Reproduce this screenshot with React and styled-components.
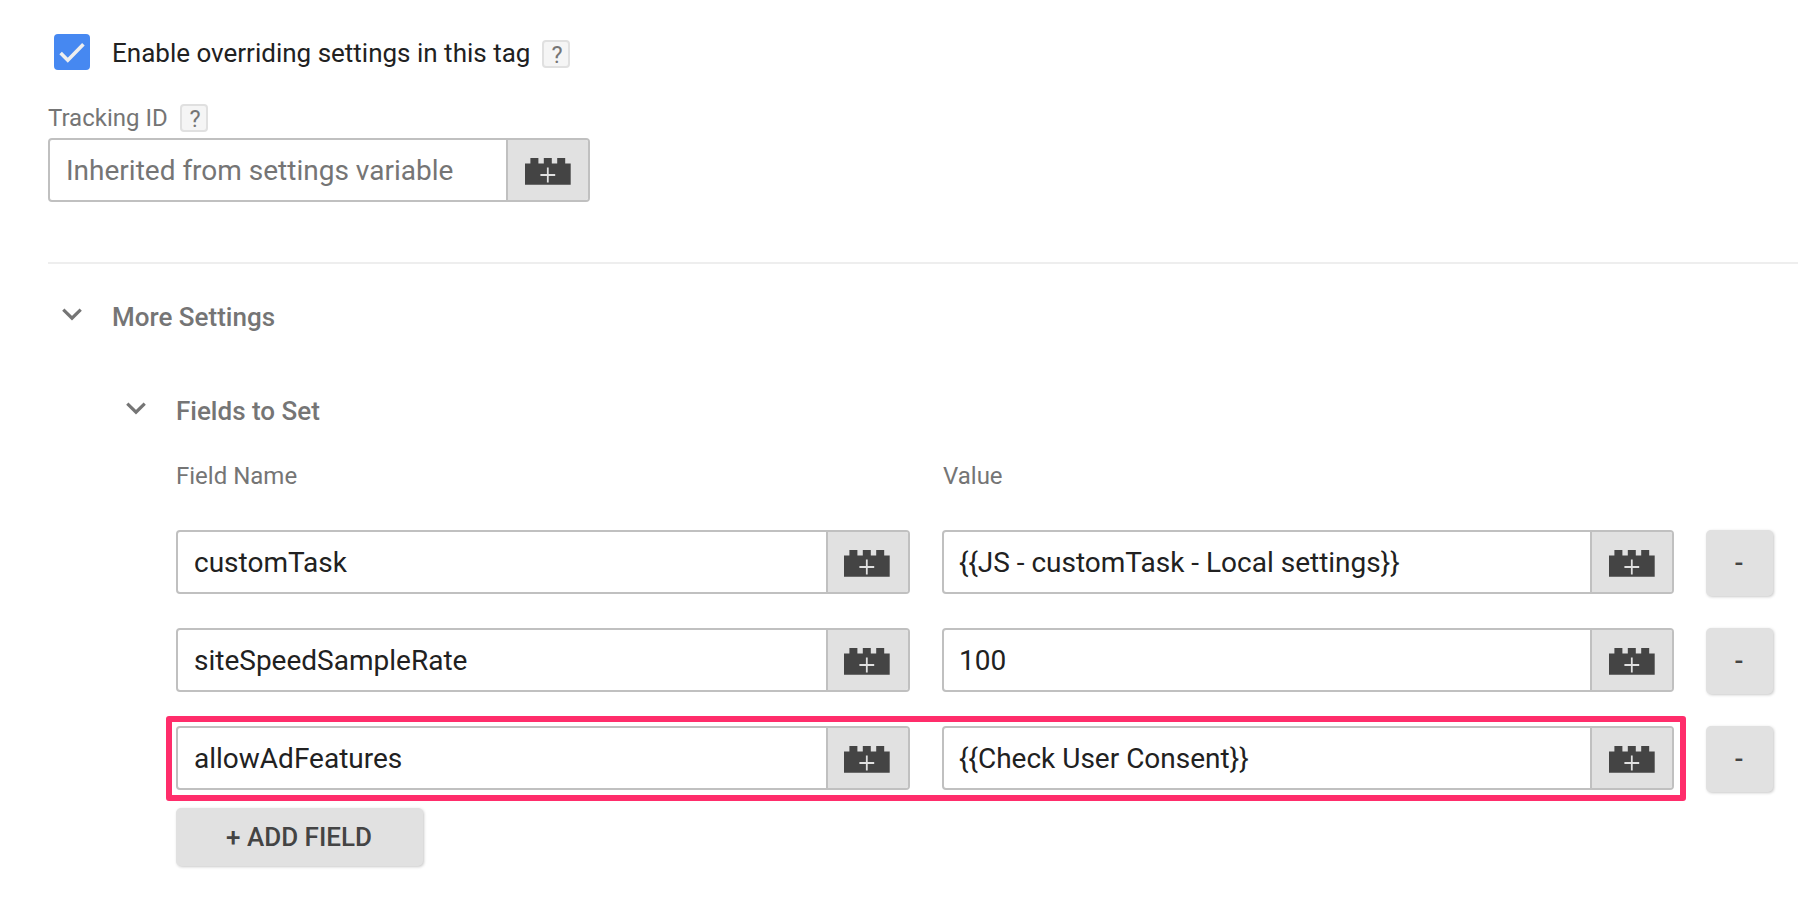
import React from 'react';
import styled, { createGlobalStyle } from 'styled-components';

const GlobalStyle = createGlobalStyle`
  *, *::before, *::after { box-sizing: border-box; }
  body {
    margin: 0;
    background: #fff;
    font-family: Roboto, "Liberation Sans", sans-serif;
    color: #212121;
    overflow: hidden;
  }
`;

const Page = styled.main`
  display: flex;
  flex-direction: column;
  width: 1798px;
  height: 900px;
  padding: 34px 0 0 48px;
`;

const CheckRow = styled.label`
  display: flex;
  align-items: flex-start;
  height: 36px;
  padding-left: 6px;
`;

const CheckBox = styled.span`
  display: flex;
  width: 36px;
  height: 36px;
  border-radius: 4px;
  background: #4688f1;
`;

const CheckText = styled.span`
  margin: 1px 12px 0 22px;
  font-size: 26px;
  line-height: 36px;
  width: 418px;
  white-space: nowrap;
`;

const Help = styled.span`
  display: flex;
  align-items: center;
  justify-content: center;
  width: 28px;
  height: 28px;
  margin-top: ${(p) => p.$top || 0}px;
  padding: 2px 0 0 2px;
  border: 2px solid #e0e0e0;
  border-radius: 4px;
  background: #f5f5f5;
  color: #757575;
  font-size: 23.5px;
  line-height: 24px;
`;

const LabelRow = styled.div`
  display: flex;
  align-items: center;
  height: 28px;
  margin: 34px 0 6px;
`;

const Label = styled.span`
  width: ${(p) => p.$width}px;
  padding-left: ${(p) => p.$inset || 0}px;
  color: #757575;
  font-size: 24px;
  line-height: 28px;
  white-space: nowrap;
`;

const Field = styled.div`
  display: flex;
  width: ${(p) => p.$width}px;
  height: 64px;
  border: 2px solid #c0c0c0;
  border-radius: 4px;
  background: #fff;
  overflow: hidden;
`;

const FieldText = styled.div`
  flex: 1;
  padding: 1px 0 0 ${(p) => p.$inset}px;
  color: ${(p) => (p.$placeholder ? '#757575' : '#212121')};
  font-size: 28px;
  line-height: 60px;
  height: 61px;
  white-space: nowrap;
`;

const VariableButton = styled.button`
  display: flex;
  align-items: flex-start;
  width: 82px;
  height: 60px;
  padding: 18px 0 0 ${(p) => p.$inset}px;
  border: 0;
  border-left: 2px solid #c0c0c0;
  background: #e1e1e1;
`;

const Divider = styled.hr`
  width: 100%;
  height: 2px;
  margin: 60px 0 0;
  border: 0;
  background: #eee;
`;

const SectionHeader = styled.div`
  display: flex;
  align-items: center;
  height: 36px;
  margin-top: ${(p) => p.$top}px;
  padding-left: ${(p) => p.$indent}px;
`;

const SectionTitle = styled.h2`
  margin: 0 0 0 30px;
  color: #757575;
  font-size: 26px;
  font-weight: 500;
  line-height: 36px;
`;

const ChevronSvg = styled.svg`
  display: block;
  margin-bottom: 5px;
`;

const Fields = styled.section`
  display: flex;
  flex-direction: column;
  padding-left: 128px;
`;

const ColumnHeaders = styled.div`
  display: flex;
  gap: 32px;
  margin: 33px 0 40px;
`;

const Rows = styled.div`
  display: flex;
  flex-direction: column;
  gap: 34px;
`;

const Row = styled.div`
  position: relative;
  display: flex;
  align-items: flex-start;
  gap: 32px;
  height: 64px;
`;

const Highlight = styled.span`
  position: absolute;
  top: -10px;
  left: -10px;
  width: 1520px;
  height: 85px;
  border: 6px solid #ff2d6b;
  border-radius: 3px;
  pointer-events: none;
`;

const Button = styled.button`
  flex: none;
  width: ${(p) => p.$width}px;
  height: ${(p) => p.$height}px;
  padding: 0 1px 0 0;
  border: 0;
  border-radius: 5px;
  background: #e1e1e1;
  box-shadow: 1px 1px 3px rgba(0, 0, 0, 0.22);
  color: #444;
  font-family: inherit;
  font-size: 26px;
  font-weight: 500;
  line-height: ${(p) => p.$height}px;
`;

const AddButton = styled(Button)`
  margin-top: 18px;
`;

function Brick() {
  return (
    <svg width="46" height="27" viewBox="0 0 46 27">
      <path
        fill="#444"
        d="M0 5.4H5.4V0H13.4V5.4H18.8V0H26.8V5.4H32.2V0H40.2V5.4H45.7V26.8H0Z"
      />
      <path stroke="#e1e1e1" strokeWidth="1.8" d="M15.4 17H30.2M22.8 9.6V24.4" />
    </svg>
  );
}

function Chevron() {
  return (
    <ChevronSvg width="20" height="13" viewBox="0 0 20 13">
      <path fill="none" stroke="#757575" strokeWidth="3.2" d="M1.3 1.6L10 10.2L18.7 1.6" />
    </ChevronSvg>
  );
}

function VariableField({ text, width, placeholder, textInset = 16, iconInset = 17 }) {
  return (
    <Field $width={width}>
      <FieldText $placeholder={placeholder} $inset={textInset}>{text}</FieldText>
      <VariableButton $inset={iconInset} aria-label="Insert variable">
        <Brick />
      </VariableButton>
    </Field>
  );
}

const rows = [
  { name: 'customTask', value: '{{JS - customTask - Local settings}}' },
  { name: 'siteSpeedSampleRate', value: '100' },
  { name: 'allowAdFeatures', value: '{{Check User Consent}}', highlighted: true },
];

export default function App() {
  return (
    <>
      <GlobalStyle />
      <Page>
        <CheckRow>
          <CheckBox>
            <svg width="36" height="36" viewBox="0 0 36 36">
              <path fill="none" stroke="#eee" strokeWidth="3.6" d="M6.6 19L13.8 26.3L29.4 10.3" />
            </svg>
          </CheckBox>
          <CheckText>Enable overriding settings in this tag</CheckText>
          <Help $top={6}>?</Help>
        </CheckRow>

        <LabelRow>
          <Label $width={132}>Tracking ID</Label>
          <Help>?</Help>
        </LabelRow>
        <VariableField text="Inherited from settings variable" width={542} placeholder />

        <Divider />

        <SectionHeader $top={35} $indent={14}>
          <Chevron />
          <SectionTitle>More Settings</SectionTitle>
        </SectionHeader>
        <SectionHeader $top={58} $indent={78}>
          <Chevron />
          <SectionTitle>Fields to Set</SectionTitle>
        </SectionHeader>

        <Fields>
          <ColumnHeaders>
            <Label $width={734}>Field Name</Label>
            <Label $width={732} $inset={1}>Value</Label>
          </ColumnHeaders>
          <Rows>
            {rows.map((row) => (
              <Row key={row.name}>
                <VariableField text={row.name} width={734} iconInset={16} />
                <VariableField text={row.value} width={732} textInset={15} />
                <Button $width={67} $height={66}>-</Button>
                {row.highlighted && <Highlight />}
              </Row>
            ))}
          </Rows>
          <AddButton $width={247} $height={58}>+ ADD FIELD</AddButton>
        </Fields>
      </Page>
    </>
  );
}
